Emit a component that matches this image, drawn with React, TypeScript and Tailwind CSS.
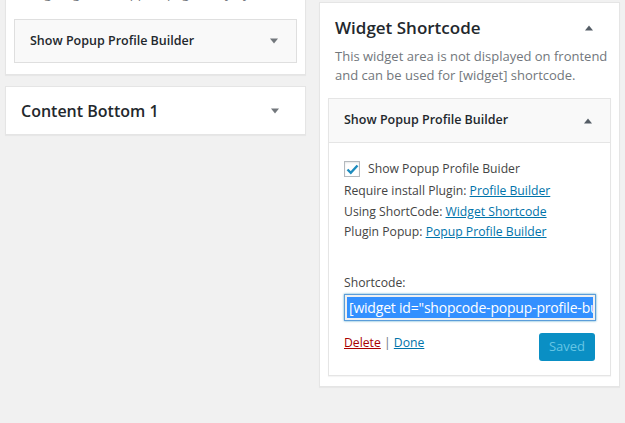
import React from "react";

const Down = () => (
  <svg width="10" height="6" viewBox="0 0 10 6" className="block">
    <polygon points="1,0.5 9,0.5 5,5.5" fill="#72777c" />
  </svg>
);
const Up = () => (
  <svg width="10" height="6" viewBox="0 0 10 6" className="block">
    <polygon points="1,5.5 9,5.5 5,0.5" fill="#555d66" />
  </svg>
);

export default function App() {
  const font = { fontFamily: '"Open Sans", "Noto Sans", sans-serif' };
  return (
    <div
      className="w-[625px] h-[423px] bg-[#f1f1f1] overflow-hidden flex items-start text-[12.2px] text-[#444]"
      style={font}
    >
      {/* Left column */}
      <div className="ml-[5px] w-[301px] flex flex-col">
        <div className="-mt-[30px] bg-white border border-[#e5e5e5] shadow-[0_1px_1px_rgba(0,0,0,0.04)] px-[8px] pb-[11px] pt-[13px]">
          <p className="pl-[7px] leading-[19px] text-[13px] text-[#72777c] whitespace-nowrap overflow-hidden">
            Widgets gather support pages only by
          </p>
          <div className="mt-[16px] h-[44px] bg-[#f9f9f9] border border-[#dfdfdf] flex items-center justify-between pl-[15px] pr-[17px]">
            <span className="font-[550] text-[#23282d] text-[12.5px]">Show Popup Profile Builder</span>
            <Down />
          </div>
        </div>
        <div className="mt-[11px] h-[49px] bg-white border border-[#e5e5e5] shadow-[0_1px_1px_rgba(0,0,0,0.04)] flex items-center justify-between pl-[15px] pr-[25px]">
          <span className="font-semibold text-[#23282d] text-[16px]">Content Bottom 1</span>
          <Down />
        </div>
      </div>

      {/* Right column */}
      <div className="ml-[13px] mt-[2px] w-[301px] bg-white border border-[#e5e5e5] shadow-[0_1px_1px_rgba(0,0,0,0.04)] px-[8px] pb-[10px]">
        <div className="h-[44px] flex items-center justify-between pl-[7px] pr-[17px] pt-[6px]">
          <span className="font-semibold text-[#23282d] text-[17px]">Widget Shortcode</span>
          <Up />
        </div>
        <p className="pl-[7px] leading-[19px] text-[13px] text-[#72777c] whitespace-nowrap">
          This widget area is not displayed on frontend
          <br />
          and can be used for [widget] shortcode.
        </p>
        <div className="mt-[13px] border border-[#e5e5e5] shadow-[0_1px_1px_rgba(0,0,0,0.04)]">
          <div className="h-[44px] bg-[#f9f9f9] border-b border-[#e5e5e5] flex items-center justify-between pl-[15px] pr-[17px]">
            <span className="font-[550] text-[12.5px] text-[#23282d]">Show Popup Profile Builder</span>
            <Up />
          </div>
          <div className="px-[15px] pt-[18px] pb-[14px]">
            <div className="flex items-center h-[16px]">
              <div className="w-[16px] h-[16px] border border-[#b4b9be] bg-white shadow-[inset_0_1px_2px_rgba(0,0,0,0.1)] flex items-center justify-center">
                <svg width="13" height="11" viewBox="0 0 13 11">
                  <path d="M1.5 5.5 L4.8 8.8 L11.5 1.5" stroke="#1e8cbe" strokeWidth="2.4" fill="none" />
                </svg>
              </div>
              <span className="ml-[8px]">Show Popup Profile Buider</span>
            </div>
            <div className="mt-[4px] leading-[20.5px]">
              <div>
                Require install Plugin: <a className="text-[#0073aa] underline">Profile Builder</a>
              </div>
              <div>
                Using ShortCode: <a className="text-[#0073aa] underline">Widget Shortcode</a>
              </div>
              <div>
                Plugin Popup: <a className="text-[#0073aa] underline">Popup Profile Builder</a>
              </div>
            </div>
            <div className="mt-[31px] leading-[18px]">Shortcode:</div>
            <div className="mt-[2px] w-[252px] h-[27px] border border-[#5b9dd9] shadow-[0_0_2px_rgba(30,140,190,0.8)] bg-[#f0f0f0] p-[2px] overflow-hidden">
              <div className="h-full bg-[#3390ff] text-white text-[14px] tracking-[-0.2px] leading-[21px] whitespace-nowrap overflow-hidden pl-[2px]">
                [widget id="shopcode-popup-profile-builder-2"]
              </div>
            </div>
            <div className="mt-[12px] flex items-start justify-between">
              <div className="pt-[1px]">
                <a className="text-[#a00] underline">Delete</a>
                <span className="text-[#72777c]"> | </span>
                <a className="text-[#0073aa] underline">Done</a>
              </div>
              <div className="w-[56px] h-[28px] rounded-[3px] bg-[#0a8fc4] text-[#66c6e4] text-[13px] flex items-center justify-center">
                Saved
              </div>
            </div>
          </div>
        </div>
      </div>
    </div>
  );
}
